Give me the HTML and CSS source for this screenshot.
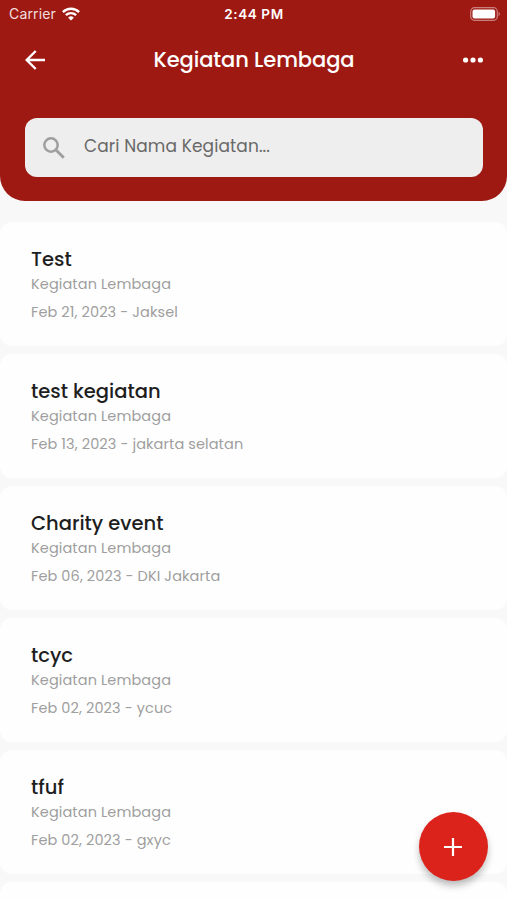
FILE: index.html
```
<!DOCTYPE html>
<html lang="id">
<head>
    <meta charset="UTF-8">
    <meta name="viewport" content="width=device-width, initial-scale=1.0">
    <title>Kegiatan Lembaga</title>
    <link rel="stylesheet" href="styles.css">
</head>
<body>
    <div class="app">
        <header class="header">
            <div class="status-bar">
                <div class="status-left">
                    <span class="carrier">Carrier</span>
                    <svg width="18" height="14" viewBox="0 0 18 14" fill="none" stroke="#fff" stroke-width="2.4">
                        <path d="M0.9 5.1a11.6 11.6 0 0 1 16.2 0"/>
                        <path d="M3.9 8.2a7.3 7.3 0 0 1 10.2 0"/>
                        <path d="M9 13.6L6.1 10.7a4.1 4.1 0 0 1 5.8 0z" fill="#fff" stroke="none"/>
                    </svg>
                </div>
                <span class="status-time">2:44 PM</span>
                <svg class="battery" width="31" height="14" viewBox="0 0 31 14">
                    <rect x="0.7" y="0.7" width="26.6" height="12.6" rx="3.8" fill="none" stroke="#fff" stroke-opacity="0.45" stroke-width="1.2"/>
                    <rect x="2.5" y="2.5" width="22.6" height="9" rx="2" fill="#fff"/>
                    <path d="M28.6 4.8a2.6 2.6 0 0 1 0 4.4z" fill="#fff" fill-opacity="0.5"/>
                </svg>
            </div>

            <div class="nav-bar">
                <svg width="20" height="20" viewBox="0 0 20 20" fill="none" stroke="#fff" stroke-width="2.4">
                    <path d="M20 10H2M10.7 1L1.7 10l9 9"/>
                </svg>
                <h1>Kegiatan Lembaga</h1>
                <svg width="20" height="6" viewBox="0 0 20 6" fill="#fff">
                    <circle cx="2.6" cy="3" r="2.6"/>
                    <circle cx="10" cy="3" r="2.6"/>
                    <circle cx="17.4" cy="3" r="2.6"/>
                </svg>
            </div>

            <div class="search-box">
                <svg width="22" height="22" viewBox="0 0 22 22" fill="none" stroke="#9f9f9f" stroke-width="2.5">
                    <circle cx="8" cy="8" r="6.7"/>
                    <path d="M12.8 12.8l8 8" stroke-width="2.9"/>
                </svg>
                <span class="search-text">Cari Nama Kegiatan...</span>
            </div>
        </header>

        <main class="event-list">
            <div class="event-card">
                <h2>Test</h2>
                <p class="category">Kegiatan Lembaga</p>
                <p class="date">Feb 21, 2023 - Jaksel</p>
            </div>
            <div class="event-card">
                <h2>test kegiatan</h2>
                <p class="category">Kegiatan Lembaga</p>
                <p class="date">Feb 13, 2023 - jakarta selatan</p>
            </div>
            <div class="event-card">
                <h2>Charity event</h2>
                <p class="category">Kegiatan Lembaga</p>
                <p class="date">Feb 06, 2023 - DKI Jakarta</p>
            </div>
            <div class="event-card">
                <h2>tcyc</h2>
                <p class="category">Kegiatan Lembaga</p>
                <p class="date">Feb 02, 2023 - ycuc</p>
            </div>
            <div class="event-card">
                <h2>tfuf</h2>
                <p class="category">Kegiatan Lembaga</p>
                <p class="date">Feb 02, 2023 - gxyc</p>
            </div>
            <div class="event-card"></div>
        </main>

        <button class="add-btn" aria-label="Tambah kegiatan">
            <svg width="18" height="18" viewBox="0 0 18 18" stroke="#fff" stroke-width="2.2">
                <path d="M9 0v18M0 9h18"/>
            </svg>
        </button>
    </div>
</body>
</html>
```
FILE: styles.css
```
* {
    margin: 0;
    padding: 0;
    box-sizing: border-box;
}

body {
    font-family: Poppins, Inter, 'Liberation Sans', sans-serif;
    background: #f8f8f8;
}

svg {
    display: block;
    flex-shrink: 0;
}

.app {
    position: relative;
    height: 900px;
    overflow: hidden;
}

.header {
    height: 201px;
    background: #9f1913;
    border-radius: 0 0 25px 25px;
}

/* Status bar */
.status-bar {
    display: grid;
    grid-template-columns: 1fr auto 1fr;
    align-items: center;
    height: 27px;
    padding: 0 6px 0 9px;
    font-family: Inter, sans-serif;
    font-size: 14px;
    color: #fff;
}

.status-left {
    display: flex;
    align-items: center;
    gap: 6px;
}

.carrier {
    opacity: 0.85;
    letter-spacing: 0.15px;
}

.status-time {
    margin-right: 2px;
    font-weight: 600;
    font-size: 13.5px;
    letter-spacing: 0.6px;
}

.battery {
    justify-self: end;
}

/* Title row */
.nav-bar {
    display: flex;
    align-items: center;
    justify-content: space-between;
    height: 65px;
    padding: 0 24px 0 25px;
}

.nav-bar h1 {
    font-size: 21px;
    font-weight: 500;
    color: #fff;
    letter-spacing: -0.1px;
}

.search-box {
    display: flex;
    align-items: center;
    gap: 19px;
    height: 59px;
    margin: 26px 24px 0 25px;
    padding: 0 18px;
    background: #eee;
    border-radius: 12px;
}

.search-text {
    margin-bottom: 3px;
    font-size: 17px;
    color: #686868;
    letter-spacing: 0.1px;
}

/* Event cards */
.event-list {
    display: flex;
    flex-direction: column;
    gap: 8px;
    padding-top: 21px;
}

.event-card {
    flex-shrink: 0;
    height: 124px;
    padding: 24px 31px;
    background: #fefefe;
    border-radius: 12px;
}

.event-card h2 {
    font-size: 19.5px;
    line-height: 27px;
    font-weight: 500;
    color: #1e1e1e;
}

.event-card p {
    font-size: 14.5px;
    line-height: 22px;
    color: #9f9f9f;
    letter-spacing: 0.1px;
}

.event-card .date {
    margin-top: 6px;
}

/* Floating button */
.add-btn {
    position: absolute;
    right: 19px;
    bottom: 19px;
    display: flex;
    align-items: center;
    justify-content: center;
    width: 69px;
    height: 69px;
    padding-right: 1px;
    border: none;
    border-radius: 50%;
    background: #dc231b;
    box-shadow: 0 5px 7px rgba(0, 0, 0, 0.25);
}
```
